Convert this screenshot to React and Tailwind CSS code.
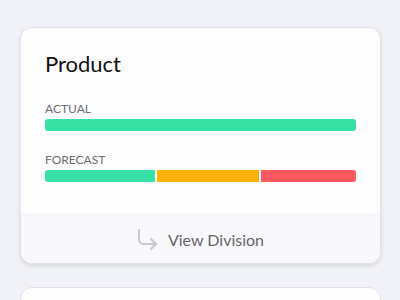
export default function App() {
  return (
    <div
      className="min-h-[300px] h-[300px] overflow-hidden bg-[#f1f2f7] px-[20px] pt-[27px]"
      style={{ fontFamily: 'Lato, "Noto Sans", sans-serif' }}
    >
      <div className="w-[361px] overflow-hidden rounded-[12px] border border-[#e2e2e8] bg-[#fdfdfe] shadow-[0_2px_4px_rgba(0,0,0,0.1)]">
        <div className="px-[24px] pb-[31px] pt-[22px]">
          <h1 className="text-[22px] leading-[28px] font-normal text-[#111]">Product</h1>

          <div className="mt-[23px] text-[12px] leading-[16px] uppercase text-[#6e6e73]">Actual</div>
          <div className="mt-[2px] h-[12px] rounded-[3px] bg-[#37e1a6]" />

          <div className="mt-[21px] text-[12px] leading-[16px] uppercase text-[#6e6e73]">Forecast</div>
          <div className="mt-[2px] flex h-[12px] gap-[2px]">
            <div className="w-[110px] rounded-l-[3px] bg-[#37e1a6]" />
            <div className="w-[102px] bg-[#ffb000]" />
            <div className="flex-1 rounded-r-[3px] bg-[#ff5962]" />
          </div>
        </div>

        <div className="flex h-[50px] items-center justify-center gap-[9px] bg-[#f8f7fa] pt-[4px]">
          <svg width="22" height="24" viewBox="0 0 22 24" fill="none" stroke="#c9c9ce" strokeWidth="2" strokeLinecap="round" strokeLinejoin="round">
            <path d="M2 2v10a4 4 0 0 0 4 4h13" />
            <path d="M14 11l5 5-5 5" />
          </svg>
          <span className="text-[16px] leading-[22px] text-[#66666b]">View Division</span>
        </div>
      </div>

      <div className="mt-[23px] h-[40px] w-[361px] rounded-t-[12px] border border-[#e2e2e8] bg-[#fdfdfe]" />
    </div>
  )
}
